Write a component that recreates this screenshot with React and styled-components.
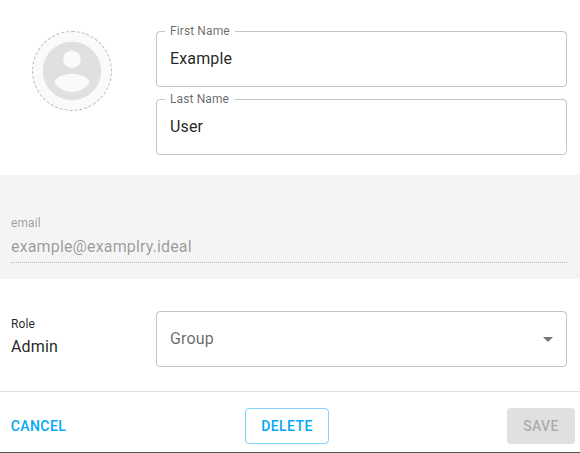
import React from "react";
import styled, { createGlobalStyle } from "styled-components";

const GlobalStyle = createGlobalStyle`
  *, *::before, *::after { box-sizing: border-box; }
  body {
    margin: 0;
    background: #fff;
    color: rgba(0, 0, 0, 0.87);
    font-family: Roboto, "Liberation Sans", sans-serif;
    font-size: 16px;
    letter-spacing: 0.15px;
    overflow: hidden;
  }
`;

const Dialog = styled.form`
  display: flex;
  flex-direction: column;
  width: 580px;
  height: 453px;
  border-bottom: 1px solid #555;
`;

const Profile = styled.section`
  display: flex;
  align-items: flex-start;
  height: 175px;
  padding: 31px 13px 0 32px;
`;

const Avatar = styled.div`
  display: flex;
  flex: none;
  align-items: center;
  justify-content: center;
  width: 80px;
  height: 80px;
  margin-right: 44px;
  border: 1px dashed #b5b5b5;
  border-radius: 50%;
  background: #fafafa;

  svg { display: block; flex: none; }
`;

const Names = styled.div`
  display: flex;
  flex: 1;
  flex-direction: column;
  gap: 12px;
`;

const Field = styled.label`
  position: relative;
  display: flex;
  flex: 1 0 auto;
  align-items: center;
  justify-content: space-between;
  height: 56px;
  padding: 0 6px 2px 13px;
  border: 1px solid rgba(0, 0, 0, 0.23);
  border-radius: 4px;
`;

const FloatingLabel = styled.span`
  position: absolute;
  top: -8px;
  left: 8px;
  width: ${(p) => p.$width}px;
  padding: 0 5px;
  background: #fff;
  color: rgba(0, 0, 0, 0.6);
  font-size: 12px;
  line-height: 14px;
  letter-spacing: 0.11px;
  white-space: nowrap;
`;

const Input = styled.input`
  width: 100%;
  padding: 0;
  border: 0;
  outline: 0;
  background: transparent;
  color: inherit;
  font: inherit;
  letter-spacing: inherit;
`;

const Placeholder = styled.span`
  color: rgba(0, 0, 0, 0.6);
`;

const Arrow = styled.svg`
  display: block;
  margin-top: 2px;
  fill: #757575;
`;

const EmailBand = styled.section`
  height: 104px;
  padding: 40px 13px 0 11px;
  background: #f4f4f4;
  color: rgba(0, 0, 0, 0.38);
`;

const Caption = styled.div`
  font-size: 12px;
  line-height: 16px;
  letter-spacing: 0.11px;
`;

const EmailValue = styled.div`
  height: 32px;
  padding-top: 4px;
  border-bottom: 1px dotted #b8b8b8;
  line-height: 23px;
`;

const RoleRow = styled.section`
  display: flex;
  height: 113px;
  padding: 32px 13px 0 11px;
  border-bottom: 1px solid #e0e0e0;
`;

const Role = styled.div`
  width: 145px;
  padding-top: 5px;
`;

const RoleValue = styled.div`
  padding-top: 3px;
  line-height: 23px;
`;

const Actions = styled.footer`
  display: grid;
  grid-template-columns: 242px 262px 68px;
  padding: 16px 5px 8px 3px;
`;

const Button = styled.button`
  height: 36px;
  width: ${(p) => p.$width}px;
  padding: 0;
  border: 1px solid ${(p) => (p.$variant === "outlined" ? "rgba(3, 169, 244, 0.5)" : "transparent")};
  border-radius: 4px;
  background: ${(p) => (p.$variant === "contained" ? "#e0e0e0" : "transparent")};
  color: #03a9f4;
  font: 500 14px/24px Roboto, "Liberation Sans", sans-serif;
  letter-spacing: 0.4px;
  text-transform: uppercase;

  &:disabled { color: rgba(0, 0, 0, 0.26); }
`;

const TextField = ({ label, value, labelWidth }) => (
  <Field>
    <FloatingLabel $width={labelWidth}>{label}</FloatingLabel>
    <Input defaultValue={value} />
  </Field>
);

export default function App() {
  return (
    <>
      <GlobalStyle />
      <Dialog>
        <Profile>
          <Avatar>
            <svg width="70" height="70" viewBox="0 0 24 24" fill="#e0e0e0">
              <path d="M12 2C6.48 2 2 6.48 2 12s4.48 10 10 10 10-4.48 10-10S17.52 2 12 2zm0 3c1.66 0 3 1.34 3 3s-1.34 3-3 3-3-1.34-3-3 1.34-3 3-3zm0 14.2c-2.5 0-4.71-1.28-6-3.22.03-1.99 4-3.08 6-3.08 1.99 0 5.97 1.09 6 3.08-1.29 1.94-3.5 3.22-6 3.22z" />
            </svg>
          </Avatar>
          <Names>
            <TextField label="First Name" value="Example" labelWidth={70} />
            <TextField label="Last Name" value="User" labelWidth={69} />
          </Names>
        </Profile>
        <EmailBand>
          <Caption>email</Caption>
          <EmailValue>example@examplry.ideal</EmailValue>
        </EmailBand>
        <RoleRow>
          <Role>
            <Caption>Role</Caption>
            <RoleValue>Admin</RoleValue>
          </Role>
          <Field as="div">
            <Placeholder>Group</Placeholder>
            <Arrow width="24" height="24" viewBox="0 0 24 24">
              <path d="M7 10l5 5 5-5z" />
            </Arrow>
          </Field>
        </RoleRow>
        <Actions>
          <Button type="button" $width={71}>Cancel</Button>
          <Button type="button" $variant="outlined" $width={84}>Delete</Button>
          <Button type="button" $variant="contained" $width={68} disabled>Save</Button>
        </Actions>
      </Dialog>
    </>
  );
}
